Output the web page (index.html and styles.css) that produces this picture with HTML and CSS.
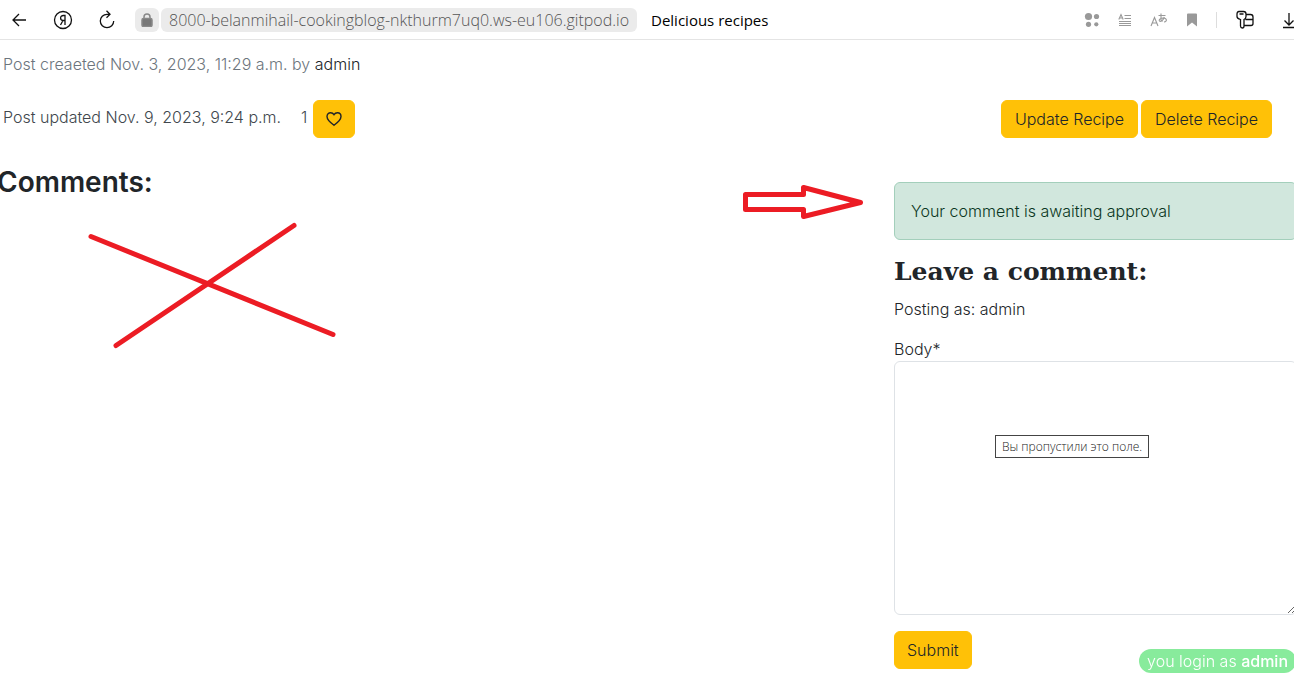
FILE: index.html
```
<!DOCTYPE html>
<html lang="en">
<head>
<meta charset="utf-8">
<title>Delicious recipes</title>
<link rel="stylesheet" href="styles.css">
</head>
<body>
<header class="toolbar">
  <button class="tool back" aria-label="Back"><svg width="16" height="16" viewBox="0 0 16 16"><path d="M15 8H2M8 2L2 8l6 6"/></svg></button>
  <button class="tool home" aria-label="Home"><svg width="20" height="20" viewBox="0 0 20 20"><circle cx="10" cy="10" r="8.500"/><path d="M12 15V5.500H10.500C8.500 5.500 7.600 6.500 7.600 8S8.500 10.500 10.300 10.500H12M10 10.500L7.500 15"/></svg></button>
  <button class="tool reload" aria-label="Reload"><svg width="18" height="20" viewBox="0 0 18 20"><path d="M11.800 4.300H9A6.700 6.700 0 1 0 15.700 11M8.500 .8L12 4.300 8.500 7.800"/></svg></button>
  <span class="lock"><svg width="12" height="14" viewBox="0 0 12 14"><rect x="1" y="5.500" width="10" height="8" rx="1.500" fill="#777"/><path d="M3 6V4a3 3 0 0 1 6 0v2"/></svg></span>
  <span class="url">8000-belanmihail-cookingblog-nkthurm7uq0.ws-eu106.gitpod.io</span>
  <span class="page-title">Delicious recipes</span>
  <nav class="actions">
    <button class="tool" aria-label="Extensions"><svg width="16" height="16" viewBox="0 0 16 16" class="solid"><circle cx="4.500" cy="4.500" r="3.600"/><circle cx="12.500" cy="4.500" r="2.600"/><circle cx="4.500" cy="12.300" r="2.600"/><circle cx="12.300" cy="12.300" r="2.100"/></svg></button>
    <button class="tool" aria-label="Reader"><svg width="14" height="14" viewBox="0 0 14 14" class="gray"><path d="M.8 6.500L3 1.500l2.200 5M1.500 5h3M6.500 2.500H13M6.500 5.500H13M1 8.500H13M1 10.500H13M1 12.500H13"/></svg></button>
    <button class="tool" aria-label="Translate"><svg width="18" height="16" viewBox="0 0 18 16" class="gray"><path d="M1 14L4.500 5.500 8 14M2.300 11H6.700M8.500 3.500H15.500M11 1.500V7.500Q11 9 12.500 9.500M14.300 5C13.500 8 11.500 9.800 9.800 9.300 8 8.300 10.500 5.800 13.500 6 17 6.200 17.500 9.500 14 10"/></svg></button>
    <button class="tool" aria-label="Bookmark"><svg width="12" height="14" viewBox="0 0 12 14" class="solid"><path d="M1 1.500Q1 .5 2 .5h8q1 0 1 1V13.500L6 9.500 1 13.500z"/></svg></button>
    <span class="divider"></span>
    <button class="tool" aria-label="Passwords"><svg width="20" height="20" viewBox="0 0 20 20"><path d="M4 1.500h4.500q2.500 0 2.500 2.500v2.500q0 2-2 3v6.500q0 2-1.700 2t-1.800-2V9.500Q2 8.500 2 6.500V4Q2 1.500 4 1.500zM4.500 4h4M11 4.500h4.500q2.500 0 2.500 2.500v6.500q0 2-2 2H9M10.500 9.500H18"/></svg></button>
    <button class="tool download" aria-label="Downloads"><svg width="14" height="18" viewBox="0 0 14 18"><path d="M7 2v12M2.500 9.500L7 14l4.500-4.500M1 16.500H13"/></svg></button>
  </nav>
</header>
<main class="page">
  <p class="created">Post creaeted Nov. 3, 2023, 11:29 a.m. by <span class="author">admin</span></p>
  <div class="post-row">
    <span class="updated">Post updated Nov. 9, 2023, 9:24 p.m.</span>
    <span class="likes">1</span>
    <button class="btn like" aria-label="Like"><svg width="16" height="16" viewBox="0 0 16 16"><path d="M8 14.300C3.500 11 1 8.500 1 5.500 1 3.200 2.600 1.700 4.600 1.700 6.200 1.700 7.300 2.500 8 3.700 8.700 2.500 9.800 1.700 11.400 1.700 13.400 1.700 15 3.200 15 5.500 15 8.500 12.500 11 8 14.300z"/></svg></button>
    <div class="owner">
      <button class="btn">Update Recipe</button>
      <button class="btn">Delete Recipe</button>
    </div>
  </div>
  <div class="columns">
    <section class="comments">
      <h3 class="title">Comments:</h3>
      <svg class="cross" width="252" height="128" viewBox="0 0 252 128"><path d="M4 14.500L246 112.500M29 123.500L207 3.500"/></svg>
      <svg class="arrow" width="122" height="38" viewBox="0 0 122 38"><path d="M3.500 11.500H61.500V4.500L118.500 19.500 61.500 33.500V26.500H3.500z"/></svg>
    </section>
    <section class="reply">
      <div class="alert" role="alert">Your comment is awaiting approval</div>
      <h3 class="title serif">Leave a comment:</h3>
      <p class="posting">Posting as: admin</p>
      <form class="form">
        <label for="body">Body*</label>
        <div class="field">
          <textarea id="body" rows="10"></textarea>
          <span class="tip" role="tooltip">Вы пропустили это поле.</span>
        </div>
        <button class="btn" type="button">Submit</button>
      </form>
    </section>
  </div>
</main>
<div class="status">you login as <b>admin</b></div>
</body>
</html>
```
FILE: styles.css
```
* { box-sizing: border-box; }
body {
  margin: 0;
  overflow: hidden;
  background: #fff;
  color: #212529;
  font: 300 16px/24px Inter, sans-serif;
}
p, h3 { margin: 0; }
svg { display: block; fill: none; stroke: none; }
.toolbar {
  display: flex;
  align-items: center;
  height: 40px;
  padding-left: 11px;
  border-bottom: 1px solid #e4e4e4;
  font-family: "Open Sans", sans-serif;
  font-weight: 300;
  font-size: 16px;
  white-space: nowrap;
}
.tool {
  flex: none;
  padding: 0;
  border: 0;
  background: none;
}
.tool svg { stroke: #111; stroke-width: 1.3; }
.tool svg.gray { stroke: #999; stroke-width: 1.1; }
.tool svg.solid { fill: #999; stroke: none; }
.home { margin-left: 26px; }
.reload { margin: 0 19px 0 25px; }
.lock {
  display: grid;
  place-items: center;
  width: 24px;
  height: 24px;
  margin-right: 2px;
  border-radius: 6px;
  background: #ebebeb;
}
.lock svg { stroke: #888; stroke-width: 1.5; }
.url {
  padding: 0 8px;
  border-radius: 6px;
  background: #ebebeb;
  color: #555;
}
.page-title {
  margin-left: 14px;
  color: #000;
  font-size: 15px;
  font-weight: 400;
}
.actions {
  display: flex;
  align-items: center;
  gap: 18px;
  margin-left: auto;
  margin-right: -2px;
}
.divider { width: 1px; height: 16px; background: #ddd; }
.download { margin-left: 9px; }
.page { padding-top: 12px; }
.created { padding-left: 3px; color: #6c757d; }
.author { color: #212529; }
.post-row {
  display: flex;
  align-items: flex-start;
  margin-top: 24px;
  padding: 0 22px 0 3px;
}
.updated, .likes { padding-top: 5px; color: #41474d; }
.likes { margin: 0 6px 0 20px; }
.owner { display: flex; gap: 3px; margin-left: auto; }
.btn {
  padding: 6px 12px;
  border: 1px solid #ffc107;
  border-radius: 6px;
  background: #ffc107;
  color: #212529;
  font: inherit;
}
.owner .btn { padding: 6px 13px; }
.like { padding: 10px 12px; }
.like svg { stroke: #212529; stroke-width: 1.4; }
.columns {
  display: grid;
  grid-template-columns: 69fr 31fr;
  margin: 27px -3px 0;
}
.title { font-size: 28px; line-height: 34px; font-weight: 600; }
.comments { position: relative; }
.cross {
  margin: 23px 0 0 90px;
  stroke: #ec1c24;
  stroke-width: 5;
  stroke-linecap: round;
}
.arrow {
  position: absolute;
  top: 18px;
  right: 30px;
  stroke: #ec1c24;
  stroke-width: 5;
}
.arrow { stroke-linejoin: round; }
.reply { padding-top: 17px; }
.alert {
  padding: 16px;
  border: 1px solid #a3cfbb;
  border-radius: 6px;
  background: #d1e7dd;
  color: #0a3622;
}
.serif {
  margin: 15px 0 8px;
  font-family: "DejaVu Serif", serif;
  font-size: 25px;
}
.form { margin-top: 16px; }
.form label { display: block; }
.field { position: relative; margin-bottom: 16px; }
.field textarea {
  display: block;
  width: 100%;
  height: 254px;
  padding: 6px 12px;
  border: 1px solid #dee2e6;
  border-radius: 6px;
  font: inherit;
  resize: vertical;
}
.tip {
  position: absolute;
  top: 74px;
  left: 101px;
  padding: 0 6px;
  border: 1px solid #444;
  background: #fff;
  color: #222;
  font: 300 12px/21px "Open Sans", sans-serif;
  white-space: nowrap;
}
.status {
  position: fixed;
  right: -2px;
  bottom: 0;
  padding: 0 8px;
  border-radius: 12px;
  background: #88eb9c;
  color: #fff;
}
.status b { font-weight: 500; }
```
